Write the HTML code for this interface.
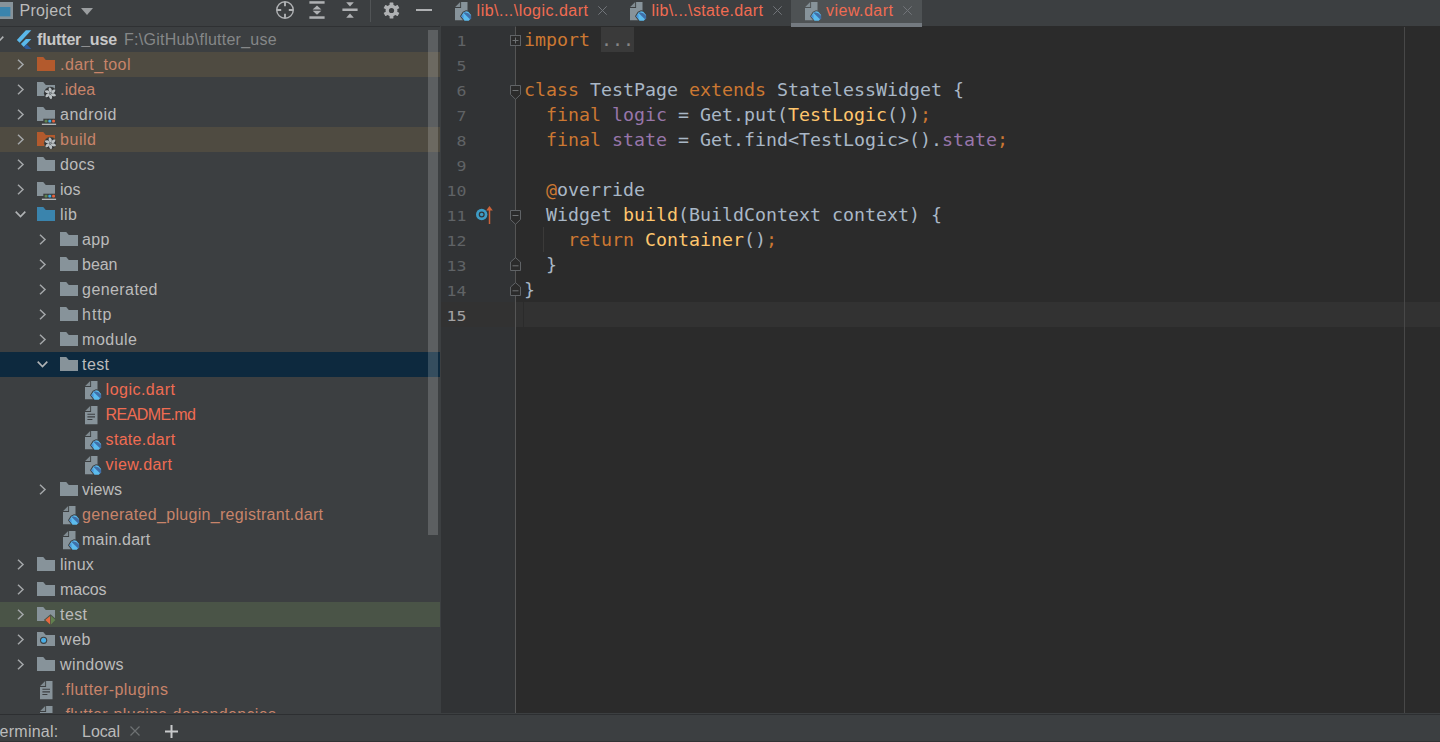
<!DOCTYPE html>
<html lang="en">
<head>
<meta charset="utf-8">
<title>view.dart - flutter_use</title>
<style>
*{box-sizing:border-box;margin:0;padding:0}
html,body{width:1440px;height:742px;overflow:hidden;background:#3c3f41}
body{position:relative;font-family:"Liberation Sans","DejaVu Sans",sans-serif;font-size:16px;color:#bbbbbb}
.abs{position:absolute}
svg{display:block;overflow:visible}
/* header */
#hdr{left:0;top:0;width:1440px;height:26px;background:#3c3f41}
#hline{left:0;top:26px;width:440px;height:1px;background:#2f3133}
.tab{position:absolute;top:0;height:26px;color:#f06c52;font-size:16px;line-height:21px;white-space:nowrap}
.tab .t{position:absolute;top:0;left:0}
.tab .x{position:absolute;top:0;color:#7e8184;font-size:15px}
/* tree */
#tree{left:0;top:27px;width:440px;height:686px;overflow:hidden;background:#3c3f41}
.row{position:absolute;left:0;width:440px;height:25px;line-height:25px;white-space:nowrap;font-size:16px;color:#bbbbbb}
.row span.l{position:absolute;top:0}
.row svg{position:absolute}
.ex{background:#4f4b41}
.sel{background:#0d293e}
.tst{background:#4a5447}
.c-ex{color:#c8846a}
.c-new{color:#f06c52}
.c-path{color:#858788}
.root{font-weight:bold;color:#c8c8c8}
.hl{top:0;line-height:21px;font-size:16px;color:#bbbbbb;white-space:nowrap}
.bl{top:4px;line-height:25px;font-size:16px;color:#bbbbbb;white-space:nowrap}
.hl.c-new{color:#f06c52}
/* editor */
#gutter{left:441px;top:26px;width:74px;height:687px;background:#313335}
#gline{left:515px;top:27px;width:1px;height:686px;background:#555555}
#ed{left:516px;top:26px;width:924px;height:687px;background:#2b2b2b}
#caret{left:516px;top:302px;width:924px;height:25px;background:#323232}
#caretg{left:441px;top:302px;width:74px;height:25px;background:#323232}
#margin{left:1404px;top:27px;width:1px;height:686px;background:#484848}
.ln{position:absolute;left:441px;width:25.4px;text-align:right;height:25px;line-height:25px;margin-top:2px;font-family:"DejaVu Sans Mono","Liberation Mono",monospace;font-size:13.3px;color:#606366;transform:scaleX(1.24);transform-origin:100% 50%}
.cl{position:absolute;left:524px;height:25px;line-height:25px;white-space:pre;font-family:"DejaVu Sans Mono","Liberation Mono",monospace;font-size:18.27px;color:#a9b7c6}
.k{color:#cc7832}.f{color:#ffc66d}.p{color:#9876aa}.a{color:#bbb529}
.fold{color:#858585}
/* bottom */
#bot{left:0;top:714px;width:1440px;height:28px;background:#3c3f41;border-top:1px solid #2d2f31;border-bottom:1px solid #313335}
</style>
</head>
<body>
<div id="hdr" class="abs"><svg class="abs" style="left:0;top:2px" width="13" height="17" viewBox="0 0 13 17"><rect x="-4" y="0" width="17" height="17" fill="#87939a"/><rect x="-4" y="5" width="14.4" height="9.4" fill="#3a84ad"/></svg><span id="proj" class="abs hl" style="left:19.4px;letter-spacing:0.329px">Project</span><svg class="abs" style="left:81px;top:8px" width="12" height="7" viewBox="0 0 12 7"><path d="M0,0H12L6,7Z" fill="#9b9ea0"/></svg><svg class="abs" style="left:275px;top:0" width="20" height="20" viewBox="0 0 20 20"><circle cx="10" cy="10" r="8.3" fill="none" stroke="#afb1b3" stroke-width="1.4"/><path d="M10,2V6.2M10,13.8V18M2,10H6.2M13.8,10H18" stroke="#afb1b3" stroke-width="1.9"/></svg><svg class="abs" style="left:309px;top:1px" width="16" height="18" viewBox="0 0 16 18"><rect x="0.4" y="0.2" width="15.2" height="2.5" fill="#afb1b3"/><rect x="0.4" y="15.3" width="15.2" height="2.5" fill="#afb1b3"/><path d="M3.6,8.4L8,4.4L12.4,8.4Z" fill="#afb1b3"/><path d="M3.6,9.7L8,13.7L12.4,9.7Z" fill="#afb1b3"/></svg><svg class="abs" style="left:342px;top:1px" width="16" height="18" viewBox="0 0 16 18"><rect x="0.4" y="7.5" width="15.2" height="2.5" fill="#afb1b3"/><path d="M4.2,1.2H11.8L8,5.4Z" fill="#afb1b3"/><path d="M4.2,16.8H11.8L8,12.6Z" fill="#afb1b3"/></svg><div class="abs" style="left:370px;top:0;width:1px;height:22px;background:#515456"></div><svg class="abs" style="left:382.5px;top:1.5px" width="17" height="17" viewBox="0 0 17 17"><g transform="translate(8.5,8.5)"><rect x="-1.9" y="-8.1" width="3.8" height="5" rx="0.5" transform="rotate(0)" fill="#afb1b3"/><rect x="-1.9" y="-8.1" width="3.8" height="5" rx="0.5" transform="rotate(60)" fill="#afb1b3"/><rect x="-1.9" y="-8.1" width="3.8" height="5" rx="0.5" transform="rotate(120)" fill="#afb1b3"/><rect x="-1.9" y="-8.1" width="3.8" height="5" rx="0.5" transform="rotate(180)" fill="#afb1b3"/><rect x="-1.9" y="-8.1" width="3.8" height="5" rx="0.5" transform="rotate(240)" fill="#afb1b3"/><rect x="-1.9" y="-8.1" width="3.8" height="5" rx="0.5" transform="rotate(300)" fill="#afb1b3"/><circle r="5.9" fill="#afb1b3"/><circle r="2.6" fill="#3c3f41"/></g></svg><div class="abs" style="left:416px;top:8.5px;width:15.5px;height:2.6px;background:#afb1b3"></div><div class="abs" style="left:791px;top:0;width:131px;height:27px;background:#4e5254"></div><div class="abs" style="left:791px;top:23px;width:131px;height:4px;background:#747a80"></div><svg class="abs" style="left:455px;top:2px" width="17" height="20" viewBox="0 0 17 20"><path d="M6.1,0H12.5V18.2H0V5.9H6.1Z" fill="#87939a"/><path d="M0.2,5L5.2,0V5Z" fill="#87939a" opacity="0.9"/><g transform="translate(11.2 14.2) scale(0.94) translate(-11.2 -14.2)"><path d="M4.6,14.3L7.6,9.5L11,7.9L13.9,8.4L17.4,12.6V16.9L14.3,20.1H9L4.6,14.3Z" fill="#3c3f41"/><path d="M5.9,14.3L8.3,10.3L11,9L13.4,9.4L16.4,13V16.5L13.9,19.1H9.4Z" fill="#5cbcee"/><path d="M8.4,10.8L9.8,10L13.4,11L16.4,13.6V16.5L15.5,17.8Z" fill="#3f6fa8"/><path d="M5.9,14.3L8.3,12.2V16.8Z" fill="#4a8fd6"/></g></svg><span id="t1" class="abs hl c-new" style="left:476.6px;letter-spacing:0.480px">lib\...\logic.dart</span><svg class="abs" style="left:598px;top:5.5px" width="9" height="9" viewBox="0 0 9 9"><path d="M0.3,0.3L8.7,8.7M8.7,0.3L0.3,8.7" stroke="#72757a" stroke-width="1"/></svg><svg class="abs" style="left:630px;top:2px" width="17" height="20" viewBox="0 0 17 20"><path d="M6.1,0H12.5V18.2H0V5.9H6.1Z" fill="#87939a"/><path d="M0.2,5L5.2,0V5Z" fill="#87939a" opacity="0.9"/><g transform="translate(11.2 14.2) scale(0.94) translate(-11.2 -14.2)"><path d="M4.6,14.3L7.6,9.5L11,7.9L13.9,8.4L17.4,12.6V16.9L14.3,20.1H9L4.6,14.3Z" fill="#3c3f41"/><path d="M5.9,14.3L8.3,10.3L11,9L13.4,9.4L16.4,13V16.5L13.9,19.1H9.4Z" fill="#5cbcee"/><path d="M8.4,10.8L9.8,10L13.4,11L16.4,13.6V16.5L15.5,17.8Z" fill="#3f6fa8"/><path d="M5.9,14.3L8.3,12.2V16.8Z" fill="#4a8fd6"/></g></svg><span id="t2" class="abs hl c-new" style="left:651.6px;letter-spacing:0.381px">lib\...\state.dart</span><svg class="abs" style="left:773px;top:5.5px" width="9" height="9" viewBox="0 0 9 9"><path d="M0.3,0.3L8.7,8.7M8.7,0.3L0.3,8.7" stroke="#72757a" stroke-width="1"/></svg><svg class="abs" style="left:805px;top:2px" width="17" height="20" viewBox="0 0 17 20"><path d="M6.1,0H12.5V18.2H0V5.9H6.1Z" fill="#87939a"/><path d="M0.2,5L5.2,0V5Z" fill="#87939a" opacity="0.9"/><g transform="translate(11.2 14.2) scale(0.94) translate(-11.2 -14.2)"><path d="M4.6,14.3L7.6,9.5L11,7.9L13.9,8.4L17.4,12.6V16.9L14.3,20.1H9L4.6,14.3Z" fill="#4e5254"/><path d="M5.9,14.3L8.3,10.3L11,9L13.4,9.4L16.4,13V16.5L13.9,19.1H9.4Z" fill="#5cbcee"/><path d="M8.4,10.8L9.8,10L13.4,11L16.4,13.6V16.5L15.5,17.8Z" fill="#3f6fa8"/><path d="M5.9,14.3L8.3,12.2V16.8Z" fill="#4a8fd6"/></g></svg><span id="t3" class="abs hl c-new" style="left:826.1px;letter-spacing:0.462px">view.dart</span><svg class="abs" style="left:903px;top:5.5px" width="9" height="9" viewBox="0 0 9 9"><path d="M0.3,0.3L8.7,8.7M8.7,0.3L0.3,8.7" stroke="#72757a" stroke-width="1"/></svg></div>
<div id="hline" class="abs"></div>
<div id="tree" class="abs"><div class="row " style="top:0px"><svg style="left:-7px;top:9px" width="11" height="7" viewBox="0 0 11 7"><path d="M0.7,0.6L5.5,5.6L10.3,0.6" fill="none" stroke="#b0b3b5" stroke-width="1.6"/></svg><svg style="left:16px;top:3px" width="15" height="20" viewBox="0 0 15 20"><path d="M9.9,0.3H15.3L3.7,12.8L0.8,10.1Z" fill="#5ab8ea"/><path d="M9.9,9H15.3L7.8,17L4.9,14.1Z" fill="#5ab8ea"/><path d="M10.6,14.2L15.3,18.9H9.9L7.8,17Z" fill="#2c5b9c"/></svg><span id="r0" class="l root" style="left:37.1px;letter-spacing:-0.182px">flutter_use</span><span id="rpath" class="l c-path" style="left:124.1px;letter-spacing:0.246px">F:\GitHub\flutter_use</span></div>
<div class="row ex" style="top:25px"><svg style="left:16.5px;top:7px" width="7" height="11" viewBox="0 0 7 11"><path d="M1,0.7L6,5.5L1,10.3" fill="none" stroke="#a4a7a9" stroke-width="1.5"/></svg><svg style="left:37px;top:5px" width="18" height="14" viewBox="0 0 18 14"><path d="M0,0H6.2L8.8,2.9H18V14H0Z" fill="#b35a2d"/></svg><span id="r1" class="l c-ex" style="left:60.1px;letter-spacing:0.408px">.dart_tool</span></div>
<div class="row " style="top:50px"><svg style="left:16.5px;top:7px" width="7" height="11" viewBox="0 0 7 11"><path d="M1,0.7L6,5.5L1,10.3" fill="none" stroke="#a4a7a9" stroke-width="1.5"/></svg><svg style="left:37px;top:5px" width="18" height="14" viewBox="0 0 18 14"><path d="M0,0H6.2L8.8,2.9H18V14H0Z" fill="#87939a"/><circle cx="13.4" cy="11.3" r="6.5" fill="#3c3f41"/><circle cx="13.4" cy="11.3" r="5.6" fill="#2f3234"/><path transform="translate(13.4 11.3) rotate(8)" d="M-0.2,-1.1C-2.5,-1.9 -3.1,-4.5 -1.5,-5.9C0.5,-5.3 1.5,-3.2 0.9,-1.1Z" fill="#b9bfc2"/><path transform="translate(13.4 11.3) rotate(68)" d="M-0.2,-1.1C-2.5,-1.9 -3.1,-4.5 -1.5,-5.9C0.5,-5.3 1.5,-3.2 0.9,-1.1Z" fill="#b9bfc2"/><path transform="translate(13.4 11.3) rotate(128)" d="M-0.2,-1.1C-2.5,-1.9 -3.1,-4.5 -1.5,-5.9C0.5,-5.3 1.5,-3.2 0.9,-1.1Z" fill="#b9bfc2"/><path transform="translate(13.4 11.3) rotate(188)" d="M-0.2,-1.1C-2.5,-1.9 -3.1,-4.5 -1.5,-5.9C0.5,-5.3 1.5,-3.2 0.9,-1.1Z" fill="#b9bfc2"/><path transform="translate(13.4 11.3) rotate(248)" d="M-0.2,-1.1C-2.5,-1.9 -3.1,-4.5 -1.5,-5.9C0.5,-5.3 1.5,-3.2 0.9,-1.1Z" fill="#b9bfc2"/><path transform="translate(13.4 11.3) rotate(308)" d="M-0.2,-1.1C-2.5,-1.9 -3.1,-4.5 -1.5,-5.9C0.5,-5.3 1.5,-3.2 0.9,-1.1Z" fill="#b9bfc2"/><circle cx="13.4" cy="11.3" r="1.0" fill="#8e979d"/></svg><span id="r2" class="l c-ex" style="left:60.1px;letter-spacing:0.119px">.idea</span></div>
<div class="row " style="top:75px"><svg style="left:16.5px;top:7px" width="7" height="11" viewBox="0 0 7 11"><path d="M1,0.7L6,5.5L1,10.3" fill="none" stroke="#a4a7a9" stroke-width="1.5"/></svg><svg style="left:37px;top:5px" width="18" height="14" viewBox="0 0 18 14"><path d="M0,0H6.2L8.8,2.9H18V14H0Z" fill="#87939a"/><rect x="6.3" y="11.7" width="12" height="2.6" fill="#3c3f41"/><rect x="7.6" y="12.7" width="2.9" height="2.9" rx="1" fill="#5f8650"/><rect x="11.3" y="12.7" width="2.9" height="2.9" rx="1" fill="#3fa9e6"/><rect x="15.1" y="12.7" width="2.9" height="2.9" rx="1" fill="#e8623c"/><rect x="4.9" y="16.7" width="14.2" height="1.2" fill="#c0c4c6"/></svg><span id="r3" class="l " style="left:60.1px;letter-spacing:0.489px">android</span></div>
<div class="row ex" style="top:100px"><svg style="left:16.5px;top:7px" width="7" height="11" viewBox="0 0 7 11"><path d="M1,0.7L6,5.5L1,10.3" fill="none" stroke="#a4a7a9" stroke-width="1.5"/></svg><svg style="left:37px;top:5px" width="18" height="14" viewBox="0 0 18 14"><path d="M0,0H6.2L8.8,2.9H18V14H0Z" fill="#b35a2d"/><circle cx="13.4" cy="11.3" r="6.5" fill="#4f4b41"/><circle cx="13.4" cy="11.3" r="5.6" fill="#2f3234"/><path transform="translate(13.4 11.3) rotate(8)" d="M-0.2,-1.1C-2.5,-1.9 -3.1,-4.5 -1.5,-5.9C0.5,-5.3 1.5,-3.2 0.9,-1.1Z" fill="#b9bfc2"/><path transform="translate(13.4 11.3) rotate(68)" d="M-0.2,-1.1C-2.5,-1.9 -3.1,-4.5 -1.5,-5.9C0.5,-5.3 1.5,-3.2 0.9,-1.1Z" fill="#b9bfc2"/><path transform="translate(13.4 11.3) rotate(128)" d="M-0.2,-1.1C-2.5,-1.9 -3.1,-4.5 -1.5,-5.9C0.5,-5.3 1.5,-3.2 0.9,-1.1Z" fill="#b9bfc2"/><path transform="translate(13.4 11.3) rotate(188)" d="M-0.2,-1.1C-2.5,-1.9 -3.1,-4.5 -1.5,-5.9C0.5,-5.3 1.5,-3.2 0.9,-1.1Z" fill="#b9bfc2"/><path transform="translate(13.4 11.3) rotate(248)" d="M-0.2,-1.1C-2.5,-1.9 -3.1,-4.5 -1.5,-5.9C0.5,-5.3 1.5,-3.2 0.9,-1.1Z" fill="#b9bfc2"/><path transform="translate(13.4 11.3) rotate(308)" d="M-0.2,-1.1C-2.5,-1.9 -3.1,-4.5 -1.5,-5.9C0.5,-5.3 1.5,-3.2 0.9,-1.1Z" fill="#b9bfc2"/><circle cx="13.4" cy="11.3" r="1.0" fill="#8e979d"/></svg><span id="r4" class="l c-ex" style="left:60.1px;letter-spacing:0.497px">build</span></div>
<div class="row " style="top:125px"><svg style="left:16.5px;top:7px" width="7" height="11" viewBox="0 0 7 11"><path d="M1,0.7L6,5.5L1,10.3" fill="none" stroke="#a4a7a9" stroke-width="1.5"/></svg><svg style="left:37px;top:5px" width="18" height="14" viewBox="0 0 18 14"><path d="M0,0H6.2L8.8,2.9H18V14H0Z" fill="#87939a"/></svg><span id="r5" class="l " style="left:60.1px;letter-spacing:0.251px">docs</span></div>
<div class="row " style="top:150px"><svg style="left:16.5px;top:7px" width="7" height="11" viewBox="0 0 7 11"><path d="M1,0.7L6,5.5L1,10.3" fill="none" stroke="#a4a7a9" stroke-width="1.5"/></svg><svg style="left:37px;top:5px" width="18" height="14" viewBox="0 0 18 14"><path d="M0,0H6.2L8.8,2.9H18V14H0Z" fill="#87939a"/><rect x="6.3" y="11.7" width="12" height="2.6" fill="#3c3f41"/><rect x="7.6" y="12.7" width="2.9" height="2.9" rx="1" fill="#5f8650"/><rect x="11.3" y="12.7" width="2.9" height="2.9" rx="1" fill="#3fa9e6"/><rect x="15.1" y="12.7" width="2.9" height="2.9" rx="1" fill="#e8623c"/><rect x="4.9" y="16.7" width="14.2" height="1.2" fill="#c0c4c6"/></svg><span id="r6" class="l " style="left:60.1px;letter-spacing:-0.051px">ios</span></div>
<div class="row " style="top:175px"><svg style="left:15px;top:9px" width="11" height="7" viewBox="0 0 11 7"><path d="M0.7,0.6L5.5,5.6L10.3,0.6" fill="none" stroke="#b0b3b5" stroke-width="1.6"/></svg><svg style="left:37px;top:5px" width="18" height="14" viewBox="0 0 18 14"><path d="M0,0H6.2L8.8,2.9H18V14H0Z" fill="#3a84ad"/></svg><span id="r7" class="l " style="left:60.1px;letter-spacing:0.428px">lib</span></div>
<div class="row " style="top:200px"><svg style="left:38.5px;top:7px" width="7" height="11" viewBox="0 0 7 11"><path d="M1,0.7L6,5.5L1,10.3" fill="none" stroke="#a4a7a9" stroke-width="1.5"/></svg><svg style="left:60px;top:5px" width="18" height="14" viewBox="0 0 18 14"><path d="M0,0H6.2L8.8,2.9H18V14H0Z" fill="#87939a"/></svg><span id="r8" class="l " style="left:82.1px;letter-spacing:0.366px">app</span></div>
<div class="row " style="top:225px"><svg style="left:38.5px;top:7px" width="7" height="11" viewBox="0 0 7 11"><path d="M1,0.7L6,5.5L1,10.3" fill="none" stroke="#a4a7a9" stroke-width="1.5"/></svg><svg style="left:60px;top:5px" width="18" height="14" viewBox="0 0 18 14"><path d="M0,0H6.2L8.8,2.9H18V14H0Z" fill="#87939a"/></svg><span id="r9" class="l " style="left:82.1px;letter-spacing:-0.073px">bean</span></div>
<div class="row " style="top:250px"><svg style="left:38.5px;top:7px" width="7" height="11" viewBox="0 0 7 11"><path d="M1,0.7L6,5.5L1,10.3" fill="none" stroke="#a4a7a9" stroke-width="1.5"/></svg><svg style="left:60px;top:5px" width="18" height="14" viewBox="0 0 18 14"><path d="M0,0H6.2L8.8,2.9H18V14H0Z" fill="#87939a"/></svg><span id="r10" class="l " style="left:82.1px;letter-spacing:0.415px">generated</span></div>
<div class="row " style="top:275px"><svg style="left:38.5px;top:7px" width="7" height="11" viewBox="0 0 7 11"><path d="M1,0.7L6,5.5L1,10.3" fill="none" stroke="#a4a7a9" stroke-width="1.5"/></svg><svg style="left:60px;top:5px" width="18" height="14" viewBox="0 0 18 14"><path d="M0,0H6.2L8.8,2.9H18V14H0Z" fill="#87939a"/></svg><span id="r11" class="l " style="left:82.1px;letter-spacing:0.903px">http</span></div>
<div class="row " style="top:300px"><svg style="left:38.5px;top:7px" width="7" height="11" viewBox="0 0 7 11"><path d="M1,0.7L6,5.5L1,10.3" fill="none" stroke="#a4a7a9" stroke-width="1.5"/></svg><svg style="left:60px;top:5px" width="18" height="14" viewBox="0 0 18 14"><path d="M0,0H6.2L8.8,2.9H18V14H0Z" fill="#87939a"/></svg><span id="r12" class="l " style="left:82.1px;letter-spacing:0.469px">module</span></div>
<div class="row sel" style="top:325px"><svg style="left:37px;top:9px" width="11" height="7" viewBox="0 0 11 7"><path d="M0.7,0.6L5.5,5.6L10.3,0.6" fill="none" stroke="#b0b3b5" stroke-width="1.6"/></svg><svg style="left:60px;top:5px" width="18" height="14" viewBox="0 0 18 14"><path d="M0,0H6.2L8.8,2.9H18V14H0Z" fill="#87939a"/></svg><span id="r13" class="l " style="left:82.1px;letter-spacing:0.376px">test</span></div>
<div class="row " style="top:350px"><svg style="left:84.7px;top:4px" width="17" height="20" viewBox="0 0 17 20"><path d="M6.1,0H12.5V18.2H0V5.9H6.1Z" fill="#87939a"/><path d="M0.2,5L5.2,0V5Z" fill="#87939a" opacity="0.9"/><g transform="translate(11.2 14.2) scale(0.94) translate(-11.2 -14.2)"><path d="M4.6,14.3L7.6,9.5L11,7.9L13.9,8.4L17.4,12.6V16.9L14.3,20.1H9L4.6,14.3Z" fill="#3c3f41"/><path d="M5.9,14.3L8.3,10.3L11,9L13.4,9.4L16.4,13V16.5L13.9,19.1H9.4Z" fill="#5cbcee"/><path d="M8.4,10.8L9.8,10L13.4,11L16.4,13.6V16.5L15.5,17.8Z" fill="#3f6fa8"/><path d="M5.9,14.3L8.3,12.2V16.8Z" fill="#4a8fd6"/></g></svg><span id="r14" class="l c-new" style="left:105.6px;letter-spacing:0.488px">logic.dart</span></div>
<div class="row " style="top:375px"><svg style="left:84.7px;top:4px" width="13" height="18" viewBox="0 0 13 18"><path d="M6.1,0H12.5V18.2H0V5.9H6.1Z" fill="#87939a"/><path d="M0.2,5L5.2,0V5Z" fill="#87939a" opacity="0.9"/><path d="M2.4,8.3H10M2.4,10.9H10M2.4,13.5H7.4" stroke="#3c3f41" stroke-width="1.1"/></svg><span id="r15" class="l c-new" style="left:105.6px;letter-spacing:-0.592px">README.md</span></div>
<div class="row " style="top:400px"><svg style="left:84.7px;top:4px" width="17" height="20" viewBox="0 0 17 20"><path d="M6.1,0H12.5V18.2H0V5.9H6.1Z" fill="#87939a"/><path d="M0.2,5L5.2,0V5Z" fill="#87939a" opacity="0.9"/><g transform="translate(11.2 14.2) scale(0.94) translate(-11.2 -14.2)"><path d="M4.6,14.3L7.6,9.5L11,7.9L13.9,8.4L17.4,12.6V16.9L14.3,20.1H9L4.6,14.3Z" fill="#3c3f41"/><path d="M5.9,14.3L8.3,10.3L11,9L13.4,9.4L16.4,13V16.5L13.9,19.1H9.4Z" fill="#5cbcee"/><path d="M8.4,10.8L9.8,10L13.4,11L16.4,13.6V16.5L15.5,17.8Z" fill="#3f6fa8"/><path d="M5.9,14.3L8.3,12.2V16.8Z" fill="#4a8fd6"/></g></svg><span id="r16" class="l c-new" style="left:105.6px;letter-spacing:0.310px">state.dart</span></div>
<div class="row " style="top:425px"><svg style="left:84.7px;top:4px" width="17" height="20" viewBox="0 0 17 20"><path d="M6.1,0H12.5V18.2H0V5.9H6.1Z" fill="#87939a"/><path d="M0.2,5L5.2,0V5Z" fill="#87939a" opacity="0.9"/><g transform="translate(11.2 14.2) scale(0.94) translate(-11.2 -14.2)"><path d="M4.6,14.3L7.6,9.5L11,7.9L13.9,8.4L17.4,12.6V16.9L14.3,20.1H9L4.6,14.3Z" fill="#3c3f41"/><path d="M5.9,14.3L8.3,10.3L11,9L13.4,9.4L16.4,13V16.5L13.9,19.1H9.4Z" fill="#5cbcee"/><path d="M8.4,10.8L9.8,10L13.4,11L16.4,13.6V16.5L15.5,17.8Z" fill="#3f6fa8"/><path d="M5.9,14.3L8.3,12.2V16.8Z" fill="#4a8fd6"/></g></svg><span id="r17" class="l c-new" style="left:105.6px;letter-spacing:0.407px">view.dart</span></div>
<div class="row " style="top:450px"><svg style="left:38.5px;top:7px" width="7" height="11" viewBox="0 0 7 11"><path d="M1,0.7L6,5.5L1,10.3" fill="none" stroke="#a4a7a9" stroke-width="1.5"/></svg><svg style="left:60px;top:5px" width="18" height="14" viewBox="0 0 18 14"><path d="M0,0H6.2L8.8,2.9H18V14H0Z" fill="#87939a"/></svg><span id="r18" class="l " style="left:82.1px;letter-spacing:-0.043px">views</span></div>
<div class="row " style="top:475px"><svg style="left:62.7px;top:4px" width="17" height="20" viewBox="0 0 17 20"><path d="M6.1,0H12.5V18.2H0V5.9H6.1Z" fill="#87939a"/><path d="M0.2,5L5.2,0V5Z" fill="#87939a" opacity="0.9"/><g transform="translate(11.2 14.2) scale(0.94) translate(-11.2 -14.2)"><path d="M4.6,14.3L7.6,9.5L11,7.9L13.9,8.4L17.4,12.6V16.9L14.3,20.1H9L4.6,14.3Z" fill="#3c3f41"/><path d="M5.9,14.3L8.3,10.3L11,9L13.4,9.4L16.4,13V16.5L13.9,19.1H9.4Z" fill="#5cbcee"/><path d="M8.4,10.8L9.8,10L13.4,11L16.4,13.6V16.5L15.5,17.8Z" fill="#3f6fa8"/><path d="M5.9,14.3L8.3,12.2V16.8Z" fill="#4a8fd6"/></g></svg><span id="r19" class="l c-ex" style="left:82.1px;letter-spacing:0.313px">generated_plugin_registrant.dart</span></div>
<div class="row " style="top:500px"><svg style="left:62.7px;top:4px" width="17" height="20" viewBox="0 0 17 20"><path d="M6.1,0H12.5V18.2H0V5.9H6.1Z" fill="#87939a"/><path d="M0.2,5L5.2,0V5Z" fill="#87939a" opacity="0.9"/><g transform="translate(11.2 14.2) scale(0.94) translate(-11.2 -14.2)"><path d="M4.6,14.3L7.6,9.5L11,7.9L13.9,8.4L17.4,12.6V16.9L14.3,20.1H9L4.6,14.3Z" fill="#3c3f41"/><path d="M5.9,14.3L8.3,10.3L11,9L13.4,9.4L16.4,13V16.5L13.9,19.1H9.4Z" fill="#5cbcee"/><path d="M8.4,10.8L9.8,10L13.4,11L16.4,13.6V16.5L15.5,17.8Z" fill="#3f6fa8"/><path d="M5.9,14.3L8.3,12.2V16.8Z" fill="#4a8fd6"/></g></svg><span id="r20" class="l " style="left:82.1px;letter-spacing:0.177px">main.dart</span></div>
<div class="row " style="top:525px"><svg style="left:16.5px;top:7px" width="7" height="11" viewBox="0 0 7 11"><path d="M1,0.7L6,5.5L1,10.3" fill="none" stroke="#a4a7a9" stroke-width="1.5"/></svg><svg style="left:37px;top:5px" width="18" height="14" viewBox="0 0 18 14"><path d="M0,0H6.2L8.8,2.9H18V14H0Z" fill="#87939a"/></svg><span id="r21" class="l " style="left:60.1px;letter-spacing:0.179px">linux</span></div>
<div class="row " style="top:550px"><svg style="left:16.5px;top:7px" width="7" height="11" viewBox="0 0 7 11"><path d="M1,0.7L6,5.5L1,10.3" fill="none" stroke="#a4a7a9" stroke-width="1.5"/></svg><svg style="left:37px;top:5px" width="18" height="14" viewBox="0 0 18 14"><path d="M0,0H6.2L8.8,2.9H18V14H0Z" fill="#87939a"/></svg><span id="r22" class="l " style="left:60.1px;letter-spacing:-0.165px">macos</span></div>
<div class="row tst" style="top:575px"><svg style="left:16.5px;top:7px" width="7" height="11" viewBox="0 0 7 11"><path d="M1,0.7L6,5.5L1,10.3" fill="none" stroke="#a4a7a9" stroke-width="1.5"/></svg><svg style="left:37px;top:5px" width="18" height="14" viewBox="0 0 18 14"><path d="M0,0H6.2L8.8,2.9H18V14H0Z" fill="#87939a"/><path d="M6.8,13.1L13.5,7.2L20,13.1L13.5,19Z" fill="#4a5447"/><path d="M8.3,13.1L13.1,9V17.4Z" fill="#e8683f"/><path d="M18.4,13.1L14,9V17.4Z" fill="#62804f"/></svg><span id="r23" class="l " style="left:60.1px;letter-spacing:0.376px">test</span></div>
<div class="row " style="top:600px"><svg style="left:16.5px;top:7px" width="7" height="11" viewBox="0 0 7 11"><path d="M1,0.7L6,5.5L1,10.3" fill="none" stroke="#a4a7a9" stroke-width="1.5"/></svg><svg style="left:37px;top:5px" width="18" height="14" viewBox="0 0 18 14"><path d="M0,0H6.2L8.8,2.9H18V14H0Z" fill="#87939a"/><circle cx="6.6" cy="8.3" r="3.6" fill="#3c3f41"/><circle cx="6.6" cy="8.3" r="2.5" fill="#4aaee6"/></svg><span id="r24" class="l " style="left:60.1px;letter-spacing:0.480px">web</span></div>
<div class="row " style="top:625px"><svg style="left:16.5px;top:7px" width="7" height="11" viewBox="0 0 7 11"><path d="M1,0.7L6,5.5L1,10.3" fill="none" stroke="#a4a7a9" stroke-width="1.5"/></svg><svg style="left:37px;top:5px" width="18" height="14" viewBox="0 0 18 14"><path d="M0,0H6.2L8.8,2.9H18V14H0Z" fill="#87939a"/></svg><span id="r25" class="l " style="left:60.1px;letter-spacing:0.349px">windows</span></div>
<div class="row " style="top:650px"><svg style="left:40px;top:4px" width="13" height="18" viewBox="0 0 13 18"><path d="M6.1,0H12.5V18.2H0V5.9H6.1Z" fill="#87939a"/><path d="M0.2,5L5.2,0V5Z" fill="#87939a" opacity="0.9"/><path d="M2.4,8.3H10M2.4,10.9H10M2.4,13.5H7.4" stroke="#3c3f41" stroke-width="1.1"/></svg><span id="r26" class="l c-ex" style="left:60.6px;letter-spacing:0.456px">.flutter-plugins</span></div>
<div class="row " style="top:675px"><svg style="left:40px;top:4px" width="13" height="18" viewBox="0 0 13 18"><path d="M6.1,0H12.5V18.2H0V5.9H6.1Z" fill="#87939a"/><path d="M0.2,5L5.2,0V5Z" fill="#87939a" opacity="0.9"/><path d="M2.4,8.3H10M2.4,10.9H10M2.4,13.5H7.4" stroke="#3c3f41" stroke-width="1.1"/></svg><span id="r27" class="l c-ex" style="left:60.6px;letter-spacing:0.356px">.flutter-plugins-dependencies</span></div><div class="abs" style="left:428px;top:3px;width:10px;height:505px;background:rgba(255,255,255,0.17)"></div></div>
<div id="gutter" class="abs"></div>
<div id="ed" class="abs"></div>
<div id="caret" class="abs"></div>
<div id="caretg" class="abs"></div>
<div id="gline" class="abs"></div>
<div id="margin" class="abs"></div>
<div id="code"><div class="abs" style="left:601px;top:27px;width:33px;height:24.5px;background:#3a3a3a"></div><div class="ln" style="top:27px">1</div>
<div class="cl" style="top:27px"><span class="k">import</span> <span class="fold">...</span></div>
<div class="ln" style="top:52px">5</div>
<div class="ln" style="top:77px">6</div>
<div class="cl" style="top:77px"><span class="k">class</span> TestPage <span class="k">extends</span> StatelessWidget {</div>
<div class="ln" style="top:102px">7</div>
<div class="cl" style="top:102px">  <span class="k">final</span> <span class="p">logic</span> = Get.put(<span class="f">TestLogic</span>())<span class="k">;</span></div>
<div class="ln" style="top:127px">8</div>
<div class="cl" style="top:127px">  <span class="k">final</span> <span class="p">state</span> = Get.find&lt;TestLogic&gt;().<span class="p">state</span><span class="k">;</span></div>
<div class="ln" style="top:152px">9</div>
<div class="ln" style="top:177px">10</div>
<div class="cl" style="top:177px">  <span class="k">@</span>override</div>
<div class="ln" style="top:202px">11</div>
<div class="cl" style="top:202px">  Widget <span class="f">build</span>(BuildContext context) {</div>
<div class="ln" style="top:227px">12</div>
<div class="cl" style="top:227px">    <span class="k">return</span> <span class="f">Container</span>()<span class="k">;</span></div>
<div class="ln" style="top:252px">13</div>
<div class="cl" style="top:252px">  }</div>
<div class="ln" style="top:277px">14</div>
<div class="cl" style="top:277px">}</div>
<div class="ln" style="top:302px;color:#a4a3a3">15</div><svg class="abs" style="left:510px;top:34.5px" width="11" height="11" viewBox="0 0 11 11"><rect x="0.5" y="0.5" width="10" height="10" fill="#2b2b2b" stroke="#606366"/><path d="M2.5,5.5H8.5M5.5,2.5V8.5" stroke="#6e7173" stroke-width="1"/></svg><svg class="abs" style="left:510px;top:85px" width="11" height="15" viewBox="0 0 11 15"><path d="M0.5,0.5H10.5V9.5L5.5,14.3L0.5,9.5Z" fill="#2b2b2b" stroke="#606366"/><path d="M2.5,5.5H8.5" stroke="#6e7173" stroke-width="1"/></svg><svg class="abs" style="left:510px;top:210px" width="11" height="15" viewBox="0 0 11 15"><path d="M0.5,0.5H10.5V9.5L5.5,14.3L0.5,9.5Z" fill="#2b2b2b" stroke="#606366"/><path d="M2.5,5.5H8.5" stroke="#6e7173" stroke-width="1"/></svg><svg class="abs" style="left:510px;top:256.8px" width="11" height="14" viewBox="0 0 11 14"><path d="M0.5,13.5H10.5V5L5.5,0.7L0.5,5Z" fill="#2b2b2b" stroke="#606366"/><path d="M2.5,8.8H8.5" stroke="#6e7173" stroke-width="1"/></svg><svg class="abs" style="left:510px;top:281.8px" width="11" height="14" viewBox="0 0 11 14"><path d="M0.5,13.5H10.5V5L5.5,0.7L0.5,5Z" fill="#2b2b2b" stroke="#606366"/><path d="M2.5,8.8H8.5" stroke="#6e7173" stroke-width="1"/></svg><svg class="abs" style="left:476px;top:205px" width="19" height="20" viewBox="0 0 19 20"><circle cx="5.7" cy="9.5" r="5.7" fill="#3e9bc4"/><circle cx="5.7" cy="9.5" r="2.4" fill="none" stroke="#313335" stroke-width="1.2"/><path d="M13.5,19V3" stroke="#cb6239" stroke-width="1.5"/><path d="M10.2,5.6L13.5,1L16.8,5.6Z" fill="#cb6239"/></svg><div class="abs" style="left:523px;top:302px;width:1px;height:25px;background:#2b2b2b"></div><div class="abs" style="left:791px;top:23px;width:131px;height:4px;background:#747a80"></div><div class="abs" style="left:543px;top:227px;width:1px;height:25px;background:#3b3a39"></div></div>
<div id="bot" class="abs"><span id="b1" class="abs bl" style="left:-0.4px;letter-spacing:0.237px">erminal:</span><span id="b2" class="abs bl" style="left:82.1px;letter-spacing:-0.090px">Local</span><svg class="abs" style="left:129.5px;top:11.3px" width="10" height="10" viewBox="0 0 10 10"><path d="M0.5,0.5L9.5,9.5M9.5,0.5L0.5,9.5" stroke="#6e7173" stroke-width="1.2"/></svg><svg class="abs" style="left:165px;top:9.5px" width="13" height="13" viewBox="0 0 13 13"><path d="M6.5,0V13M0,6.5H13" stroke="#c8cacb" stroke-width="2"/></svg></div>
</body>
</html>
